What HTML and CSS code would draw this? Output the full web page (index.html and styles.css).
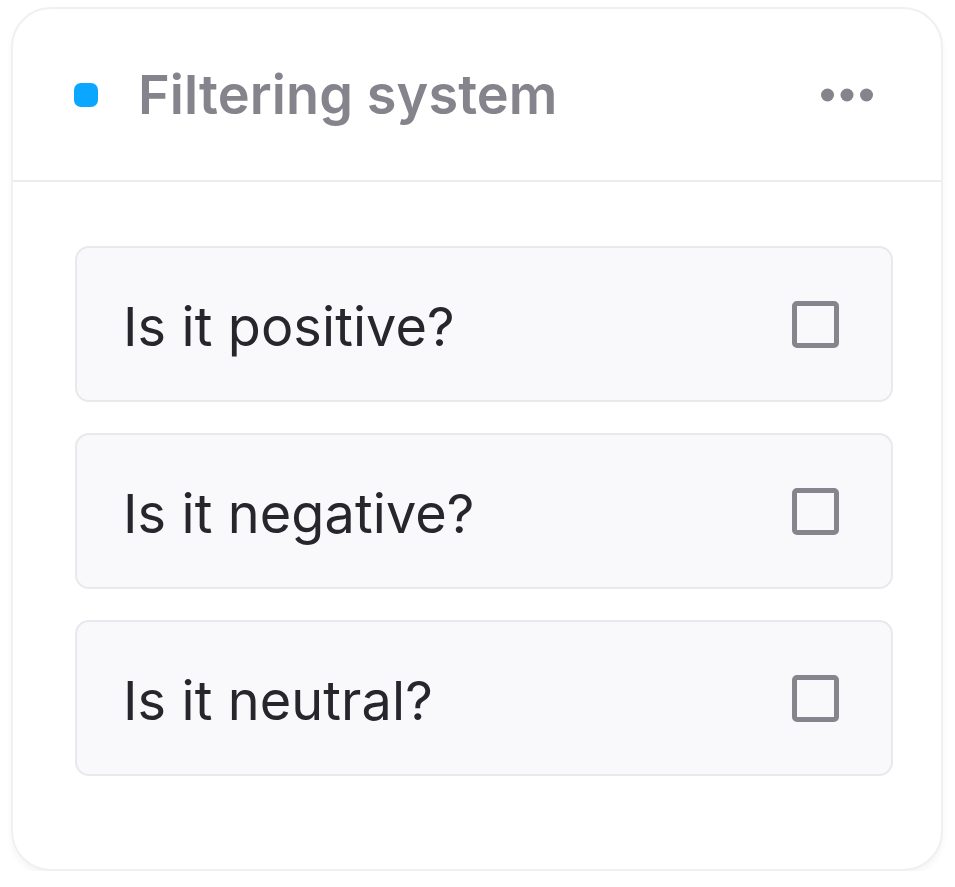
FILE: index.html
```html
<!DOCTYPE html>
<html>
<head>
<meta charset="utf-8">
<link rel="stylesheet" href="styles.css">
</head>
<body>
<div class="card">
  <div class="card-header">
    <span class="dot"></span>
    <h1 class="title">Filtering system</h1>
    <svg class="more" width="52" height="14" viewBox="0 0 52 14"><circle cx="6.5" cy="7" r="6.5" fill="#85848c"/><circle cx="26" cy="7" r="6.5" fill="#85848c"/><circle cx="45.5" cy="7" r="6.5" fill="#85848c"/></svg>
  </div>
  <div class="card-body">
    <div class="item"><span class="label">Is it positive?</span><span class="check"></span></div>
    <div class="item"><span class="label">Is it negative?</span><span class="check"></span></div>
    <div class="item"><span class="label">Is it neutral?</span><span class="check"></span></div>
  </div>
</div>
</body>
</html>
```
FILE: styles.css
```css
* { box-sizing: border-box; }
html, body { margin: 0; padding: 0; background: #ffffff; }
body {
  font-family: Inter, "Noto Sans", sans-serif;
  padding: 7px 0 0 11px;
}
.card {
  width: 932px;
  height: 864px;
  border: 2px solid #f0f0f1;
  border-radius: 40px;
  background: #ffffff;
  box-shadow: 0 4px 6px rgba(0, 0, 0, 0.045);
  display: flex;
  flex-direction: column;
}
.card-header {
  height: 173px;
  border-bottom: 2px solid #ececef;
  display: flex;
  align-items: center;
  padding: 0 68px 0 61px;
  flex-shrink: 0;
}
.dot {
  width: 24px;
  height: 24px;
  border-radius: 7px;
  background: #0aa6ff;
  flex-shrink: 0;
}
.title {
  margin: 0 0 0 40px;
  font-size: 54px;
  font-weight: 600;
  color: #85848c;
  letter-spacing: 0.1px;
  flex: 1;
}
.more { flex-shrink: 0; }
.card-body {
  padding: 64px 48px 0 62px;
  display: flex;
  flex-direction: column;
  gap: 31px;
}
.item {
  height: 156px;
  border: 2px solid #e9e9ed;
  border-radius: 14px;
  background: #f9f9fb;
  display: flex;
  align-items: center;
  justify-content: space-between;
  padding: 0 52px 0 46px;
}
.label {
  font-size: 54px;
  font-weight: 420;
  color: #27262d;
  letter-spacing: 0.1px;
  padding-top: 4px;
}
.check {
  width: 47px;
  height: 47px;
  border: 5px solid #86858d;
  border-radius: 5px;
}
```
